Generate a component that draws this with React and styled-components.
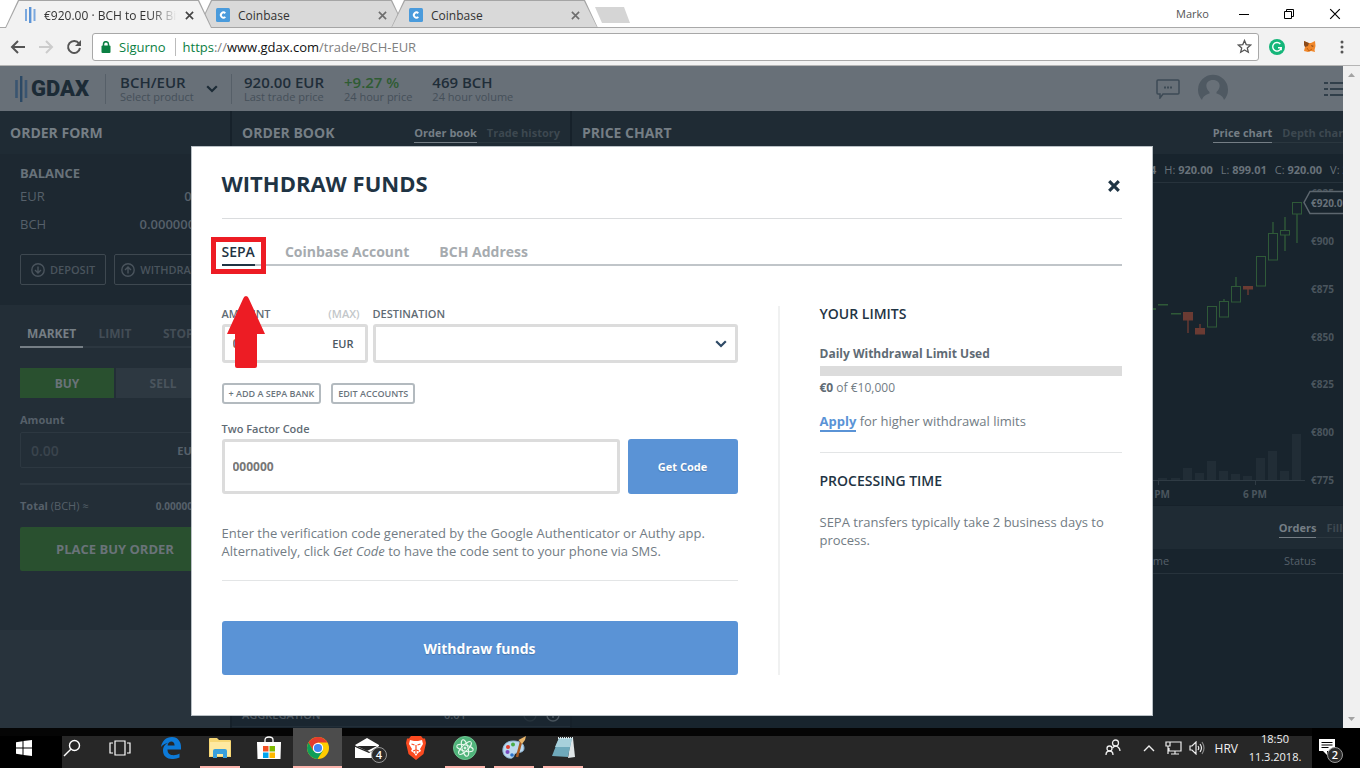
import { useState } from "react";
import styled, { createGlobalStyle } from "styled-components";

const GlobalStyle = createGlobalStyle`
    * {
        box-sizing: border-box;
    }
    body {
        margin: 0;
        font-family: "Open Sans", "Noto Sans", sans-serif;
        background: #18242d;
    }
    button, input, select {
        font-family: inherit;
        margin: 0;
    }
    button {
        cursor: pointer;
    }
    h1, h2, h3, p {
        margin: 0;
    }
`

/* ---------- browser ---------- */

const GdaxMark = () => (
    <svg width="12" height="20" viewBox="0 0 12 20">
        <path d="M2 4v12M10.500 4v12" stroke="#7aa8de" strokeWidth="2" />
        <path d="M6.200 2v16" stroke="#5a93d6" strokeWidth="2.400" />
    </svg>
)

const CoinbaseMark = () => (
    <svg width="14" height="14" viewBox="0 0 14 14">
        <rect width="14" height="14" rx="1.500" fill="#4a9bdc" />
        <path d="M9.300 5.200A2.600 2.600 0 1 0 9.300 8.900" fill="none" stroke="#fff" strokeWidth="1.900" />
    </svg>
)

const CloseIcon = ({ size = 9, color = "#5a5a5a", width = 1.8 }) => (
    <svg width={size} height={size} viewBox="0 0 10 10">
        <path d="M1 1l8 8M9 1l-8 8" stroke={color} strokeWidth={width} />
    </svg>
)

const tabs = [
    { id: 1, title: "€920.00 · BCH to EUR Bitcoin", icon: <GdaxMark />, active: true },
    { id: 2, title: "Coinbase", icon: <CoinbaseMark /> },
    { id: 3, title: "Coinbase", icon: <CoinbaseMark /> },
]

const Browser = () => {
    return <header>
        <TabStrip>
            {tabs.map((tab) => (
                <BrowserTab key={tab.id} $active={tab.active}>
                    {tab.icon}
                    <TabTitle $active={tab.active}>{tab.title}</TabTitle>
                    <PlainButton aria-label="Close tab">
                        <CloseIcon color={tab.active ? "#444" : "#6e6e6e"} />
                    </PlainButton>
                </BrowserTab>
            ))}
            <NewTab aria-label="New tab" />
            <WindowControls>
                <UserName>Marko</UserName>
                <PlainButton aria-label="Minimize">
                    <svg width="10" height="10" viewBox="0 0 10 10"><path d="M0 5.500h10" stroke="#000" /></svg>
                </PlainButton>
                <PlainButton aria-label="Restore">
                    <svg width="10" height="10" viewBox="0 0 10 10">
                        <path d="M.5 2.500h7v7h-7zM2.500 2.500v-2h7v7h-2" fill="none" stroke="#000" />
                    </svg>
                </PlainButton>
                <PlainButton aria-label="Close"><CloseIcon size={12} color="#000" width={1} /></PlainButton>
            </WindowControls>
        </TabStrip>
        <Toolbar>
            <PlainButton aria-label="Back">
                <svg width="16" height="14" viewBox="0 0 16 14">
                    <path d="M15 7H2M8 1L2 7l6 6" fill="none" stroke="#555" strokeWidth="2" />
                </svg>
            </PlainButton>
            <PlainButton aria-label="Forward">
                <svg width="16" height="14" viewBox="0 0 16 14">
                    <path d="M1 7h13M8 1l6 6-6 6" fill="none" stroke="#ccc" strokeWidth="2" />
                </svg>
            </PlainButton>
            <PlainButton aria-label="Reload">
                <svg width="16" height="16" viewBox="0 0 16 16">
                    <path d="M13 4.500A6 6 0 1 0 14 9" fill="none" stroke="#555" strokeWidth="2" />
                    <path d="M15 1v6H9z" fill="#555" />
                </svg>
            </PlainButton>
            <AddressBar>
                <svg width="10" height="12" viewBox="0 0 10 12">
                    <rect y="4.500" x=".5" width="9" height="7.500" rx="1" fill="#0b8043" />
                    <path d="M2.500 5V3.200a2.500 2.500 0 0 1 5 0V5" fill="none" stroke="#0b8043" strokeWidth="1.500" />
                </svg>
                <Secure>Sigurno</Secure>
                <Url><em>https</em>://<b>www.gdax.com</b>/trade/BCH-EUR</Url>
                <PlainButton aria-label="Bookmark">
                    <svg width="15" height="15" viewBox="0 0 15 15">
                        <path d="M7.500 1.500l1.700 4.100 4.500.4-3.400 2.900 1 4.300-3.800-2.300-3.800 2.300 1-4.300L1.300 6l4.500-.4z" fill="none" stroke="#555" strokeWidth="1.300" />
                    </svg>
                </PlainButton>
            </AddressBar>
            <Extensions>
                <PlainButton aria-label="Grammarly">
                    <svg width="16" height="16" viewBox="0 0 16 16">
                        <circle cx="8" cy="8" r="8" fill="#15b67a" />
                        <path d="M11.300 5A4.300 4.300 0 1 0 12.200 8.800H9M12.200 8.800v2.400" fill="none" stroke="#fff" strokeWidth="1.400" />
                    </svg>
                </PlainButton>
                <PlainButton aria-label="MetaMask">
                    <svg width="13" height="13" viewBox="0 0 13 13">
                        <path d="M1 1l4 2h3l4-2 .5 5-1 4 .5 2-4-1-3 1-4-1 1-4z" fill="#f0872a" />
                        <path d="M1 1l5 2-1 3-3 1-1-2zM8 5l3 1-2 1z" fill="#8a4b1c" />
                        <path d="M4 8l2 3 3-2" fill="none" stroke="#c4610f" />
                    </svg>
                </PlainButton>
                <PlainButton aria-label="Menu">
                    <svg width="4" height="14" viewBox="0 0 4 14" fill="#555">
                        <circle cx="2" cy="2" r="1.500" /><circle cx="2" cy="7" r="1.500" /><circle cx="2" cy="12" r="1.500" />
                    </svg>
                </PlainButton>
            </Extensions>
        </Toolbar>
    </header>
}

/* ---------- GDAX top bar ---------- */

const Chevron = ({ color }) => (
    <svg width="12" height="8" viewBox="0 0 12 8">
        <path d="M1.200 1.200L6 6l4.800-4.800" fill="none" stroke={color} strokeWidth="2.200" />
    </svg>
)

const TopBar = () => {
    return <Top>
        <Logo href="#">
            <svg width="15" height="28" viewBox="0 0 15 28">
                <path d="M2.500 5v18M12 5v18" stroke="#3a5571" strokeWidth="2.600" />
                <path d="M7.200 1v26" stroke="#2c4965" strokeWidth="2.400" />
            </svg>
            GDAX
        </Logo>
        <Product>
            <Stat><strong>BCH/EUR</strong><span>Select product</span></Stat>
            <Chevron color="#1c2b36" />
        </Product>
        <Stat><strong>920.00 EUR</strong><span>Last trade price</span></Stat>
        <Stat $up><strong>+9.27 %</strong><span>24 hour price</span></Stat>
        <Stat><strong>469 BCH</strong><span>24 hour volume</span></Stat>
        <TopIcons>
            <PlainButton aria-label="Chat">
                <svg width="24" height="20" viewBox="0 0 24 20">
                    <path d="M2 1h20a1 1 0 0 1 1 1v12a1 1 0 0 1-1 1H7l-3 4v-4H2a1 1 0 0 1-1-1V2a1 1 0 0 1 1-1z" fill="none" stroke="#3d4a55" strokeWidth="1.500" />
                    <path d="M8 8.500h2M11 8.500h2M14 8.500h2" stroke="#3d4a55" strokeWidth="2" />
                </svg>
            </PlainButton>
            <PlainButton aria-label="Profile">
                <svg width="30" height="30" viewBox="0 0 30 30">
                    <path d="M4 26A15 15 0 1 1 26 26C25 22 21 20 18.500 19.500V18C24 13 22 6 15 6S6 13 11.500 18v1.500C9 20 5 22 4 26z" fill="#4f5962" />
                </svg>
            </PlainButton>
            <PlainButton aria-label="Menu">
                <svg width="22" height="16" viewBox="0 0 22 16">
                    <path d="M0 2h4M6 2h16M0 8h4M6 8h16M0 14h4M6 14h16" stroke="#313f4a" strokeWidth="2" />
                </svg>
            </PlainButton>
        </TopIcons>
    </Top>
}

/* ---------- order form ---------- */

const CircleArrow = ({ up }) => (
    <svg width="14" height="14" viewBox="0 0 14 14" fill="none" stroke="#4a545d" strokeWidth="1.400">
        <circle cx="7" cy="7" r="6.200" />
        <path d={up ? "M7 10.500V4M4 7l3-3 3 3" : "M7 3.500V10M4 7l3 3 3-3"} />
    </svg>
)

const OrderForm = () => {
    return <FormColumn>
        <PanelHeader><PanelTitle>ORDER FORM</PanelTitle></PanelHeader>
        <Balance>
            <h3>BALANCE</h3>
            <BalanceRow><span>EUR</span><b>0.00</b></BalanceRow>
            <BalanceRow><span>BCH</span><b>0.00000000</b></BalanceRow>
            <Transfer>
                <OutlineButton><CircleArrow />DEPOSIT</OutlineButton>
                <OutlineButton><CircleArrow up />WITHDRAW</OutlineButton>
            </Transfer>
        </Balance>
        <Order onSubmit={(e) => e.preventDefault()}>
            <OrderTabs>
                <OrderTab type="button" $active>MARKET</OrderTab>
                <OrderTab type="button">LIMIT</OrderTab>
                <OrderTab type="button">STOP</OrderTab>
            </OrderTabs>
            <Sides>
                <Side type="button" $buy>BUY</Side>
                <Side type="button">SELL</Side>
            </Sides>
            <OrderLabel htmlFor="order-amount">Amount</OrderLabel>
            <OrderInput>
                <input id="order-amount" placeholder="0.00" />
                <span>EUR</span>
            </OrderInput>
            <Total>
                <span><b>Total</b> (BCH) ≈</span>
                <b>0.00000000</b>
            </Total>
            <PlaceOrder>PLACE BUY ORDER</PlaceOrder>
        </Order>
    </FormColumn>
}

/* ---------- order book ---------- */

const OrderBook = () => {
    return <BookColumn>
        <PanelHeader>
            <PanelTitle>ORDER BOOK</PanelTitle>
            <PanelTabs>
                <PanelTab $active>Order book</PanelTab>
                <PanelTab>Trade history</PanelTab>
            </PanelTabs>
        </PanelHeader>
        <Aggregation>
            <span>AGGREGATION</span>
            <span>0.01</span>
            <Steps>
                <svg width="14" height="14" viewBox="0 0 14 14" fill="none" stroke="#27333c" strokeWidth="1.400">
                    <circle cx="7" cy="7" r="6" /><path d="M4 7h6" />
                </svg>
                <svg width="14" height="14" viewBox="0 0 14 14" fill="none" stroke="#4a555e" strokeWidth="1.400">
                    <circle cx="7" cy="7" r="6" /><path d="M4 7h6M7 4v6" />
                </svg>
            </Steps>
        </Aggregation>
    </BookColumn>
}

/* ---------- price chart ---------- */

// x, body top, body bottom, wick top, wick bottom
const candles = [
    { x: 8, open: 121, close: 122, high: 121, low: 122 },
    { x: 21, open: 130, close: 131, high: 130, low: 131 },
    { x: 33, open: 129, close: 137, high: 129, low: 150, down: true },
    { x: 45, open: 145, close: 151, high: 141, low: 151, down: true },
    { x: 57, open: 123, close: 144, high: 123, low: 144 },
    { x: 69, open: 118, close: 134, high: 116, low: 134 },
    { x: 81, open: 103, close: 119, high: 94, low: 119 },
    { x: 93, open: 103, close: 106, high: 103, low: 112, down: true },
    { x: 106, open: 73, close: 103, high: 73, low: 103 },
    { x: 118, open: 50, close: 77, high: 39, low: 77 },
    { x: 130, open: 47, close: 52, high: 34, low: 68 },
    { x: 142, open: 19, close: 31, high: 19, low: 60 },
]
const volumes = [2, 2, 12, 7, 19, 9, 6, 4, 22, 29, 9, 46]
const prices = [
    ["€925", 10],
    ["€900", 58],
    ["€875", 106],
    ["€850", 154],
    ["€825", 201],
    ["€800", 249],
    ["€775", 297],
]

const Candles = () => (
    <CandleChart width="210" height="322" viewBox="0 0 210 322">
        {volumes.map((v, i) => (
            <rect key={i} x={candles[i].x} y={297 - v} width="9" height={v} fill="#212d36" />
        ))}
        <path d="M0 297.500h155M8.500 297v5M105.500 297v5" stroke="#2f3b44" fill="none" />
        <path d="M0 126h6" stroke="#2b5234" strokeWidth="2" />
        {candles.map((c) => {
            const color = c.down ? "#6b3b33" : "#2f5a38"
            return <g key={c.x} stroke={color}>
                <path d={`M${c.x + 5} ${c.high}V${c.open}M${c.x + 5} ${c.close}V${c.low}`} strokeWidth="1.400" />
                <rect x={c.x + 0.5} y={c.open + 0.5} width="9" height={c.close - c.open - 0.5} fill={c.down ? color : "none"} />
            </g>
        })}
        {prices.map(([label, y]) => <text key={label} x="161" y={y + 4}>{label}</text>)}
        <text x="8" y="315" textAnchor="middle">3 PM</text>
        <text x="105" y="315" textAnchor="middle">6 PM</text>
        <path d="M211 8.500h-51l-6 11 6 11h51z" fill="#18242d" stroke="#5c666e" strokeWidth="1.500" />
        <text x="161" y="24" className="current">€920.00</text>
    </CandleChart>
)

const ChartPanel = () => {
    return <ChartColumn>
        <ChartHeader>
            <PanelTitle>PRICE CHART</PanelTitle>
            <PanelTabs>
                <PanelTab $active>Price chart</PanelTab>
                <PanelTab>Depth chart</PanelTab>
            </PanelTabs>
        </ChartHeader>
        <Ohlc>
            <span>O: <b>915.04</b></span>
            <span>H: <b>920.00</b></span>
            <span>L: <b>899.01</b></span>
            <span>C: <b>920.00</b></span>
            <span>V: <b>27</b></span>
        </Ohlc>
        <Candles />
        <OrdersHeader>
            <PanelTabs>
                <PanelTab $active>Orders</PanelTab>
                <PanelTab>Fills</PanelTab>
            </PanelTabs>
        </OrdersHeader>
        <OrdersTable>
            <thead>
                <tr><th>Size</th><th>Filled</th><th>Price</th><th>Fee</th><th>Time</th><th>Status</th></tr>
            </thead>
        </OrdersTable>
    </ChartColumn>
}

/* ---------- withdraw modal ---------- */

const methods = ["SEPA", "Coinbase Account", "BCH Address"]

const WithdrawModal = () => {
    const [method, setMethod] = useState("SEPA")
    return <Modal role="dialog" aria-labelledby="withdraw-title">
        <ModalHeader>
            <h2 id="withdraw-title">WITHDRAW FUNDS</h2>
            <CloseDialog aria-label="Close dialog"><CloseIcon size={12} color="#1f3444" width={2.6} /></CloseDialog>
        </ModalHeader>
        <Methods>
            {methods.map((m) => (
                <Method key={m} $active={m === method} onClick={() => setMethod(m)}>{m}</Method>
            ))}
            <Highlight />
            <Pointer width="38" height="72" viewBox="0 0 38 72">
                <path d="M19 0q2 0 3 3l16 35H30v32q0 2-2 2H10q-2 0-2-2V38H0L16 3q1-3 3-3z" fill="#ed1c24" />
            </Pointer>
        </Methods>
        <ModalBody>
            <Funds onSubmit={(e) => e.preventDefault()}>
                <FieldRow>
                    <AmountField>
                        <LabelRow>
                            <Label htmlFor="amount">AMOUNT</Label>
                            <MaxButton type="button">(MAX)</MaxButton>
                        </LabelRow>
                        <InputBox>
                            <input id="amount" placeholder="0.00" />
                            <span>EUR</span>
                        </InputBox>
                    </AmountField>
                    <DestinationField>
                        <Label htmlFor="destination">DESTINATION</Label>
                        <InputBox>
                            <select id="destination" />
                            <Chevron color="#2e4a66" />
                        </InputBox>
                    </DestinationField>
                </FieldRow>
                <Accounts>
                    <SmallButton type="button">+ ADD A SEPA BANK</SmallButton>
                    <SmallButton type="button">EDIT ACCOUNTS</SmallButton>
                </Accounts>
                <Label htmlFor="code">Two Factor Code</Label>
                <CodeRow>
                    <InputBox $tall><input id="code" placeholder="000000" /></InputBox>
                    <CodeButton type="button">Get Code</CodeButton>
                </CodeRow>
                <Help>
                    Enter the verification code generated by the Google Authenticator or Authy app.
                    Alternatively, click <em>Get Code</em> to have the code sent to your phone via SMS.
                </Help>
                <Submit>Withdraw funds</Submit>
            </Funds>
            <Limits>
                <h3>YOUR LIMITS</h3>
                <LimitLabel htmlFor="limit">Daily Withdrawal Limit Used</LimitLabel>
                <LimitBar id="limit" value="0" max="10000" />
                <LimitText><b>€0</b> of €10,000</LimitText>
                <ApplyText><a href="#">Apply</a> for higher withdrawal limits</ApplyText>
                <h3>PROCESSING TIME</h3>
                <Processing>SEPA transfers typically take 2 business days to process.</Processing>
            </Limits>
        </ModalBody>
    </Modal>
}

/* ---------- taskbar ---------- */

const icons = {
    start: <svg width="16" height="16" viewBox="0 0 16 16" fill="#fff">
        <path d="M0 2.200L6.500 1.300v6.200H0zM7.500 1.100L16 0v7.500H7.500zM0 8.500h6.500v6.200L0 13.800zM7.500 8.500H16V16l-8.500-1.100z" />
    </svg>,
    search: <svg width="18" height="18" viewBox="0 0 18 18" fill="none" stroke="#fff" strokeWidth="1.400">
        <circle cx="11.500" cy="6.500" r="5" /><path d="M7.800 10.200L1 17" />
    </svg>,
    view: <svg width="22" height="16" viewBox="0 0 22 16" fill="none" stroke="#fff" strokeWidth="1.200">
        <path d="M6 1h10v14H6zM4 3H1v10h3M18 3h3v10h-3" />
    </svg>,
    edge: <svg width="20" height="22" viewBox="0 0 20 22" fill="#0d7ad8">
        <path d="M0 10C1 4 5 0 11 0c6 0 9 5 9 10v2.500H6.500c0 7 8 6.500 12 4v4C12 23.500 2 22.500 2 13.500 2 9 5 6.500 8 5.500 4.500 6 1.500 8 0 10zm6.600-1.500h7c0-5.500-6.500-5-7 0z" />
    </svg>,
    files: <svg width="22" height="20" viewBox="0 0 22 20">
        <path d="M0 1q0-1 1-1h7l2 2h11q1 0 1 1v16H0z" fill="#f7d774" />
        <path d="M1 4h20v14H1z" fill="#ffe9a0" />
        <path d="M4 20v-7q0-2 2-2h10q2 0 2 2v7h-4v-4H8v4z" fill="#39a0dc" />
    </svg>,
    store: <svg width="24" height="24" viewBox="0 0 24 24">
        <path d="M8 7V4q0-3 4-3t4 3v3" fill="none" stroke="#fff" strokeWidth="1.300" />
        <path d="M0 6h24l-.5 17H.5z" fill="#fff" />
        <path d="M6 10h5.500v5.500H6z" fill="#f25022" /><path d="M12.500 10H18v5.500h-5.500z" fill="#7fba00" />
        <path d="M6 16.500h5.500V22H6z" fill="#00a4ef" /><path d="M12.500 16.500H18V22h-5.500z" fill="#ffb900" />
    </svg>,
    chrome: <svg width="22" height="22" viewBox="0 0 22 22">
        <circle cx="11" cy="11" r="11" fill="#fc0" />
        <path d="M1.500 5.500A11 11 0 0 1 20.500 5.500H11L6.200 13.700z" fill="#e33b2e" />
        <path d="M1.500 5.500A11 11 0 0 0 10.500 22L15.800 13.700 6.200 13.700z" fill="#0f9d58" />
        <circle cx="11" cy="11" r="5.200" fill="#fff" /><circle cx="11" cy="11" r="4.100" fill="#4285f4" />
    </svg>,
    mail: <svg width="24" height="20" viewBox="0 0 24 20" fill="#fff">
        <path d="M0 7L12 0l12 7v1l-9 6L1 8zM0 9l11 7 5-1-4 5H0z" /><path d="M0 9l14 6 10-6v11H0z" />
        <path d="M2 8h20L12 13z" fill="#252525" />
    </svg>,
    brave: <svg width="20" height="24" viewBox="0 0 20 24">
        <path d="M5 0h10l2 2.500h2L20 7l-2.500 11L10 24l-7.500-6L0 7l1-4.500h2z" fill="#fb4a20" />
        <path d="M4 4l4 1h4l4-1 1 4-3 5 1 2-3 2-2 3-2-3-3-2 1-2-3-5z" fill="#fff" />
        <path d="M5.500 8l3 1M14.500 8l-3 1M10 9v5M7 15l3-1 3 1M10 15v3" stroke="#fb4a20" strokeWidth="1.200" fill="none" />
    </svg>,
    atom: <svg width="24" height="24" viewBox="0 0 24 24" fill="none" stroke="#e6f7ec">
        <circle cx="12" cy="12" r="11.500" fill="#4fb37a" stroke="#6cc590" />
        <ellipse cx="12" cy="12" rx="8.500" ry="3" transform="rotate(15 12 12)" />
        <ellipse cx="12" cy="12" rx="8.500" ry="3" transform="rotate(75 12 12)" />
        <ellipse cx="12" cy="12" rx="8.500" ry="3" transform="rotate(135 12 12)" />
        <circle cx="12" cy="12" r="1" fill="#e6f7ec" />
    </svg>,
    paint: <svg width="24" height="24" viewBox="0 0 24 24">
        <path d="M11 5C4 5 0 10 1 16c1 5 6 7 9 6 3-1 1-4 4-5s8 0 8-5-5-7-11-7z" fill="#bcd9ef" stroke="#8db4d3" />
        <circle cx="6" cy="11" r="2" fill="#e23d2e" /><circle cx="11" cy="8.500" r="2" fill="#49ad48" />
        <circle cx="5.500" cy="16" r="2" fill="#7a4bc0" /><circle cx="10" cy="19" r="1.800" fill="#2c74cc" />
        <path d="M19 6L15 21" stroke="#a85a20" strokeWidth="2.500" /><path d="M16.500 4L24 0l-1 4-3 4z" fill="#e8b56b" />
    </svg>,
    notes: <svg width="24" height="22" viewBox="0 0 24 22">
        <path d="M20 1h2l2 19-7 1z" fill="#dfe5e7" />
        <path d="M8 1h13l-4 19-16-1z" fill="#6fa9bb" /><path d="M8 1h13l-2 9H4z" fill="#a8d0db" />
        <path d="M7 1h15" stroke="#dce9ec" strokeDasharray="1 1" strokeWidth="2" />
    </svg>,
}

const apps = [
    { name: "Edge", icon: icons.edge },
    { name: "Explorer", icon: icons.files, open: true },
    { name: "Store", icon: icons.store },
    { name: "Chrome", icon: icons.chrome, open: true, active: true },
    { name: "Mail", icon: icons.mail, badge: 4 },
    { name: "Brave", icon: icons.brave },
    { name: "Atom", icon: icons.atom, open: true },
    { name: "Paint", icon: icons.paint, open: true },
    { name: "Notepad", icon: icons.notes, open: true },
]

const Taskbar = () => {
    return <Bar>
        <SystemButton aria-label="Start">{icons.start}</SystemButton>
        <SystemButton aria-label="Search">{icons.search}</SystemButton>
        <SystemButton aria-label="Task view">{icons.view}</SystemButton>
        <AppList>
            {apps.map((app) => (
                <AppButton key={app.name} aria-label={app.name} $open={app.open} $active={app.active}>
                    {app.icon}
                    {app.badge && <Badge>{app.badge}</Badge>}
                </AppButton>
            ))}
        </AppList>
        <Tray>
            <svg width="16" height="18" viewBox="0 0 16 18" fill="none" stroke="#eee" strokeWidth="1.300">
                <circle cx="10.500" cy="4" r="3" /><circle cx="4.500" cy="9.500" r="2.500" />
                <path d="M1 16q0-4 3.500-4T8 16M7.500 9q3-3.500 6-.5 1.500 1.500 1.500 3.500" />
            </svg>
            <svg width="12" height="8" viewBox="0 0 12 8" fill="none" stroke="#eee" strokeWidth="1.400"><path d="M1 7l5-5 5 5" /></svg>
            <svg width="17" height="14" viewBox="0 0 17 14" fill="none" stroke="#eee" strokeWidth="1.200">
                <path d="M5 1h11v9H4V7M1 1h4v4H1zM3 5v8M10 10v3M6 13h8" />
            </svg>
            <svg width="16" height="14" viewBox="0 0 16 14" fill="none" stroke="#eee" strokeWidth="1.200">
                <path d="M1 5h2l4-4v12L3 9H1zM9 5q1.500 2 0 4M11 3q3 4 0 8" /><path d="M13 1q4 6 0 12" stroke="#888" />
            </svg>
            <span>HRV</span>
            <Clock><span>18:50</span><span>11.3.2018.</span></Clock>
        </Tray>
        <ActionCenter aria-label="Notifications">
            <svg width="16" height="16" viewBox="0 0 16 16">
                <path d="M0 0h16v12H8v4l-4-4H0z" fill="#fff" /><path d="M2.500 3.500h11M2.500 6h11M2.500 8.500h7" stroke="#000" />
            </svg>
            <Badge>2</Badge>
        </ActionCenter>
    </Bar>
}

const App = () => {
    return <Screen>
        <GlobalStyle />
        <Browser />
        <Viewport>
            <Page>
                <Site>
                    <TopBar />
                    <Columns>
                        <OrderForm />
                        <OrderBook />
                        <ChartPanel />
                    </Columns>
                </Site>
                <Overlay><WithdrawModal /></Overlay>
            </Page>
            <Scrollbar>
                <svg width="7" height="4" viewBox="0 0 7 4"><path d="M0 4l3.500-4L7 4z" fill="#a3a3a3" /></svg>
                <svg width="7" height="4" viewBox="0 0 7 4"><path d="M0 0l3.500 4L7 0z" fill="#a3a3a3" /></svg>
            </Scrollbar>
        </Viewport>
        <Taskbar />
    </Screen>
}

const Screen = styled.div`
    min-height: 100vh;
    display: flex;
    flex-direction: column;
`
const PlainButton = styled.button`
    border: 0;
    padding: 0;
    background: none;
    display: flex;
    align-items: center;
    justify-content: center;
    flex-shrink: 0;
`
const TabStrip = styled.div`
    display: flex;
    height: 28px;
    padding-left: 5px;
    background: #fff;
    border-bottom: 1px solid #a9a9a9;
`
const BrowserTab = styled.div`
    position: relative;
    isolation: isolate;
    display: flex;
    align-items: center;
    gap: 8px;
    width: 207px;
    height: 28px;
    padding: 2px 18px 0 ${(p) => (p.$active ? 19 : 18)}px;
    margin-right: -14px;
    z-index: ${(p) => (p.$active ? 1 : 0)};
    &::before, &::after {
        content: "";
        position: absolute;
        inset: 0;
        z-index: -2;
        background: #a5a5a5;
        clip-path: polygon(0 100%, 13px 0, calc(100% - 13px) 0, 100% 100%);
    }
    &::after {
        inset: 1px 1px ${(p) => (p.$active ? 0 : 1)}px;
        z-index: -1;
        background: ${(p) => (p.$active ? "#f2f2f2" : "#d9d9d9")};
    }
`
const TabTitle = styled.span`
    flex: 1;
    overflow: hidden;
    white-space: nowrap;
    font-size: 12px;
    color: #333;
    mask-image: ${(p) => (p.$active ? "linear-gradient(to right, #000 80%, transparent)" : "none")};
`
const NewTab = styled.button`
    width: 35px;
    height: 16px;
    margin: 7px 0 0 11px;
    padding: 0;
    border: 0;
    background: #d5d5d5;
    clip-path: polygon(0 0, 29px 0, 100% 100%, 7px 100%);
`
const WindowControls = styled.div`
    display: flex;
    align-items: center;
    gap: 35px;
    margin-left: auto;
    padding-right: 19px;
`
const UserName = styled.span`
    font-size: 11px;
    color: #555;
    margin-right: -5px;
`
const Toolbar = styled.div`
    display: flex;
    align-items: center;
    gap: 12px;
    height: 38px;
    padding: 0 16px 0 10px;
    background: #f2f2f2;
    border-bottom: 1px solid #b5b5b5;
`
const AddressBar = styled.div`
    flex: 1;
    display: flex;
    align-items: center;
    height: 28px;
    margin: 0 -2px;
    padding: 0 6px 0 8px;
    background: #fff;
    border: 1px solid #a8a8a8;
    border-radius: 3px;
    font-size: 14px;
`
const Secure = styled.span`
    color: #0b8043;
    font-size: 13px;
    margin-left: 8px;
    padding-right: 9px;
    border-right: 1px solid #bbb;
`
const Url = styled.span`
    flex: 1;
    margin-left: 7px;
    font-size: 13px;
    color: #808080;
    em {
        font-style: normal;
        color: #0b8043;
    }
    b {
        font-weight: 400;
        color: #111;
    }
`
const Extensions = styled.div`
    display: flex;
    align-items: center;
    gap: 18px;
    button:last-child {
        margin-left: 6px;
    }
`
const Viewport = styled.div`
    flex: 1;
    display: flex;
`
const Page = styled.main`
    flex: 1;
    min-width: 0;
    display: grid;
    grid-template-columns: minmax(0, 1fr);
    overflow: hidden;
`
/* as wide as the window, its right edge runs under the scrollbar */
const Site = styled.div`
    grid-area: 1 / 1;
    width: 100vw;
    display: flex;
    flex-direction: column;
`
const Overlay = styled.div`
    grid-area: 1 / 1;
    z-index: 2;
    display: flex;
    align-items: flex-start;
    justify-content: center;
    padding: 80px 20px 12px;
`
const Scrollbar = styled.div`
    width: 17px;
    padding: 7px 0;
    background: #f0f0f0;
    display: flex;
    flex-direction: column;
    align-items: center;
    justify-content: space-between;
`
const Top = styled.div`
    display: flex;
    align-items: center;
    gap: 20px;
    height: 45px;
    padding: 0 14px;
    background: #687078;
`
const Logo = styled.a`
    display: flex;
    align-items: center;
    gap: 2px;
    width: 76px;
    font: 900 22px Roboto, sans-serif;
    color: #1c2b36;
    text-decoration: none;
`
const Product = styled.div`
    display: flex;
    align-items: center;
    justify-content: space-between;
    width: 127px;
    height: 30px;
    margin: 0 -8px 0 -5px;
    padding: 0 13px 0 14px;
    border: 0 solid #565f68;
    border-width: 0 1px;
`
const Stat = styled.div`
    display: flex;
    flex-direction: column;
    white-space: nowrap;
    strong {
        font-size: 15px;
        line-height: 16px;
        font-weight: 600;
        color: ${(p) => (p.$up ? "#2f5c33" : "#1f2d38")};
    }
    span {
        font-size: 11px;
        line-height: 13px;
        color: #454f58;
    }
`
const TopIcons = styled.div`
    display: flex;
    align-items: center;
    gap: 18px;
    margin-left: auto;
    button:last-child {
        margin-left: 78px;
    }
`
const Columns = styled.div`
    flex: 1;
    display: flex;
`
const PanelHeader = styled.div`
    display: flex;
    align-items: center;
    justify-content: space-between;
    height: 43px;
    padding: 0 10px;
    background: #1f2b34;
`
const ChartHeader = styled(PanelHeader)`
    padding-right: 12px;
`
const PanelTitle = styled.h2`
    font-size: 14px;
    font-weight: 700;
    color: #757e85;
`
const PanelTabs = styled.div`
    display: flex;
    margin-top: 3px;
`
const PanelTab = styled.button`
    border: 0;
    border-bottom: 1px solid ${(p) => (p.$active ? "#757e85" : "#2b373f")};
    background: none;
    padding: 0 0 1px;
    font-size: 11px;
    line-height: 16px;
    font-weight: 700;
    color: ${(p) => (p.$active ? "#757e85" : "#3d4850")};
    & + & {
        padding-left: 10px;
    }
`
const FormColumn = styled.section`
    flex: 0 0 232px;
    min-width: 0;
    background: #28333c;
    border-right: 2px solid #16212a;
`
const BookColumn = styled.section`
    flex: 0 0 340px;
    display: flex;
    flex-direction: column;
    justify-content: space-between;
    background: #1a2630;
    border-right: 2px solid #16212a;
    padding-bottom: 1px;
`
const ChartColumn = styled.section`
    flex: 1;
    min-width: 0;
    display: flex;
    flex-direction: column;
    background: #18242d;
`
const Balance = styled.div`
    padding: 10px 20px 20px;
    background: #1d2831;
    h3 {
        font-size: 13px;
        line-height: 18px;
        color: #68727a;
        margin-bottom: 5px;
    }
`
const BalanceRow = styled.div`
    display: flex;
    justify-content: space-between;
    margin-bottom: 10px;
    font-size: 13px;
    line-height: 18px;
    color: #56606a;
    b {
        font-weight: 600;
    }
`
const Transfer = styled.div`
    display: flex;
    gap: 8px;
    margin-top: 21px;
`
const OutlineButton = styled.button`
    display: flex;
    flex-shrink: 0;
    align-items: center;
    gap: 5px;
    height: 31px;
    padding: 0 10px;
    white-space: nowrap;
    border: 1px solid #3e4850;
    border-radius: 2px;
    background: none;
    font-size: 11px;
    font-weight: 600;
    color: #4a545d;
    &:last-child {
        padding: 0 6px;
    }
`
const Order = styled.form`
    padding: 19px 20px 59px;
    background: #232e37;
`
const OrderTabs = styled.div`
    display: grid;
    grid-template-columns: repeat(3, 1fr);
`
const OrderTab = styled.button`
    padding: 0 0 2px;
    border: 0;
    border-bottom: 2px solid ${(p) => (p.$active ? "#757e85" : "#2c3740")};
    background: none;
    font-size: 12px;
    line-height: 20px;
    font-weight: 700;
    color: ${(p) => (p.$active ? "#757e85" : "#434d56")};
`
const Sides = styled.div`
    display: grid;
    grid-template-columns: 1fr 1fr;
    gap: 2px;
    margin: 20px 0 14px;
`
const Side = styled.button`
    height: 30px;
    border: 0;
    background: ${(p) => (p.$buy ? "#29502f" : "#2d3841")};
    font-size: 12px;
    font-weight: 700;
    color: ${(p) => (p.$buy ? "#6a7379" : "#4a545d")};
`
const OrderLabel = styled.label`
    display: block;
    font-size: 11px;
    line-height: 16px;
    font-weight: 700;
    color: #56606a;
`
const OrderInput = styled.div`
    display: flex;
    align-items: center;
    height: 36px;
    margin-top: 4px;
    padding: 0 10px;
    border: 1px solid #2d3841;
    border-radius: 2px;
    font-size: 11px;
    font-weight: 700;
    color: #56606a;
    input {
        flex: 1;
        width: 100%;
        min-width: 0;
        border: 0;
        padding: 0;
        background: none;
        font-size: 14px;
        font-weight: 600;
    }
    input::placeholder {
        color: #3a444d;
    }
`
const Total = styled.div`
    display: flex;
    justify-content: space-between;
    margin: 15px 0 13px;
    padding-top: 13px;
    border-top: 2px solid #2c3740;
    font-size: 11px;
    line-height: 16px;
    color: #56606a;
    > b {
        font-size: 10px;
    }
`
const PlaceOrder = styled.button`
    width: 100%;
    height: 44px;
    border: 0;
    border-radius: 2px;
    background: #29502f;
    font-size: 13px;
    font-weight: 700;
    color: #6a7379;
`
const Aggregation = styled.div`
    display: grid;
    grid-template-columns: 1fr auto 1fr;
    align-items: center;
    height: 24px;
    padding: 0 10px;
    border-bottom: 1px solid #222e38;
    font-size: 11px;
    font-weight: 600;
    color: #4a555e;
    span:nth-child(2) {
        padding-left: 108px;
    }
`
const Steps = styled.div`
    display: flex;
    justify-content: flex-end;
    gap: 9px;
`
const Ohlc = styled.div`
    display: flex;
    justify-content: flex-end;
    gap: 8px;
    height: 29px;
    padding-right: 5px;
    border-bottom: 1px solid #27333c;
    font-size: 11px;
    line-height: 32px;
    color: #68727a;
    white-space: nowrap;
    b {
        font-weight: 700;
    }
`
const CandleChart = styled.svg`
    align-self: flex-end;
    text {
        font-size: 10px;
        font-weight: 700;
        fill: #4a555d;
    }
    .current {
        fill: #68727a;
    }
`
const OrdersHeader = styled(ChartHeader)`
    justify-content: flex-end;
    height: 44px;
    border-top: 1px solid #16212a;
`
const OrdersTable = styled.table`
    width: 100%;
    table-layout: fixed;
    border-collapse: collapse;
    th {
        height: 24px;
        padding: 0;
        border-bottom: 1px solid #27333c;
        font-size: 11px;
        font-weight: 400;
        color: #56606a;
    }
    th:nth-child(5) {
        width: 143px;
    }
    th:last-child {
        width: 132px;
        padding-left: 12px;
    }
`
const Modal = styled.div`
    flex: 1;
    max-width: 962px;
    padding: 0 30px 40px;
    background: #fff;
    border: 1px solid #b9c0c5;
    color: #5f6b74;
`
const ModalHeader = styled.div`
    display: flex;
    align-items: flex-end;
    justify-content: space-between;
    padding: 20px 2px 19px 0;
    border-bottom: 1px solid #dadcde;
    h2 {
        font-size: 22px;
        line-height: 32px;
        font-weight: 700;
        color: #1f3444;
    }
`
const CloseDialog = styled(PlainButton)`
    height: 26px;
`
const Methods = styled.div`
    position: relative;
    display: flex;
    gap: 30px;
    margin-top: 23px;
    border-bottom: 2px solid #c0c5c9;
`
const Method = styled.button`
    margin-bottom: -2px;
    padding: 0 0 2px;
    border: 0;
    border-bottom: 2px solid ${(p) => (p.$active ? "#1f3444" : "transparent")};
    background: none;
    font-size: 14px;
    line-height: 20px;
    font-weight: ${(p) => (p.$active ? 600 : 700)};
    color: ${(p) => (p.$active ? "#1f3444" : "#a6abaf")};
`
const Highlight = styled.div`
    position: absolute;
    left: -11px;
    top: -5px;
    width: 55px;
    height: 37px;
    border: 5px solid #ed1c24;
    pointer-events: none;
`
const Pointer = styled.svg`
    position: absolute;
    left: 5px;
    top: 54px;
    z-index: 1;
    pointer-events: none;
`
const ModalBody = styled.div`
    display: grid;
    grid-template-columns: 558fr 342fr;
    margin-top: 40px;
`
const Funds = styled.form`
    padding-right: 40px;
    border-right: 2px solid #f0f1f1;
`
const FieldRow = styled.div`
    display: flex;
    gap: 5px;
`
const AmountField = styled.div`
    flex: 0 0 146px;
`
const DestinationField = styled.div`
    flex: 1;
`
const LabelRow = styled.div`
    display: flex;
    justify-content: space-between;
    padding-right: 8px;
`
const Label = styled.label`
    display: block;
    font-size: 11px;
    line-height: 16px;
    font-weight: 600;
`
const MaxButton = styled.button`
    padding: 0;
    border: 0;
    background: none;
    font-size: 11px;
    line-height: 16px;
    font-weight: 600;
    color: #c3c7ca;
`
const InputBox = styled.div`
    display: grid;
    grid-template-columns: 1fr auto;
    align-items: center;
    flex: 1;
    height: ${(p) => (p.$tall ? 55 : 39)}px;
    margin-top: 2px;
    border: 3px solid #dcdcdc;
    border-radius: 3px;
    input, select {
        grid-area: 1 / 1 / 2 / 3;
        width: 100%;
        height: 100%;
        padding: 0 8px;
        border: 0;
        background: none;
        appearance: none;
        font-size: 12px;
        font-weight: 700;
        color: #444;
    }
    input::placeholder {
        color: #777;
    }
    span, svg {
        grid-area: 1 / 2;
        margin-right: 11px;
        font-size: 11px;
        font-weight: 600;
        color: #4b5862;
        pointer-events: none;
    }
    svg {
        margin-right: 8px;
    }
`
const Accounts = styled.div`
    display: flex;
    gap: 10px;
    margin: 20px 0 17px;
`
const SmallButton = styled.button`
    height: 21px;
    padding: 0 5px;
    border: 2px solid #b3babf;
    border-radius: 3px;
    background: #fff;
    font-size: 9px;
    font-weight: 600;
    color: #6b757d;
`
const CodeRow = styled.div`
    display: flex;
    align-items: flex-end;
    gap: 8px;
`
const CodeButton = styled.button`
    width: 110px;
    height: 55px;
    border: 0;
    border-radius: 3px;
    background: #5a93d6;
    color: #fff;
    font-size: 11px;
    font-weight: 700;
    text-shadow: 0 1px 1px rgba(0, 0, 0, 0.2);
`
const Help = styled.p`
    margin-top: 30px;
    padding-bottom: 20px;
    border-bottom: 1px solid #e3e5e6;
    font-size: 13px;
    line-height: 18px;
    color: #727c84;
`
const Submit = styled(CodeButton)`
    width: 100%;
    height: 54px;
    margin-top: 40px;
    font-size: 14px;
`
const Limits = styled.aside`
    padding-left: 40px;
    font-size: 13px;
    line-height: 18px;
    color: #727c84;
    h3 {
        font-size: 14px;
        line-height: 16px;
        font-weight: 600;
        color: #1f3444;
    }
`
const LimitLabel = styled.label`
    display: block;
    margin-top: 23px;
    font-size: 12px;
    font-weight: 700;
    color: #5f6b74;
`
const LimitBar = styled.progress`
    display: block;
    appearance: none;
    width: 100%;
    height: 10px;
    margin: 3px 0;
    border: 0;
    background: #dcdcdc;
    &::-webkit-progress-bar {
        background: #dcdcdc;
    }
    &::-webkit-progress-value {
        background: #5a93d6;
    }
`
const LimitText = styled.p`
    font-size: 12px;
    b {
        font-weight: 700;
        color: #5f6b74;
    }
`
const ApplyText = styled.p`
    margin: 15px 0 20px;
    padding-bottom: 20px;
    border-bottom: 1px solid #e3e5e6;
    a {
        display: inline-block;
        border-bottom: 2px solid #5a93d6;
        color: #5a93d6;
        font-weight: 700;
        text-decoration: none;
    }
`
const Processing = styled.p`
    margin-top: 24px;
`
const Bar = styled.footer`
    display: flex;
    height: 40px;
    background: linear-gradient(#050505 8px, transparent 8px), linear-gradient(to right, #000 62px, #272727 62px);
    color: #f2f2f2;
`
const SystemButton = styled(PlainButton)`
    width: 48px;
`
const AppList = styled.div`
    display: flex;
    padding-left: 2px;
`
const AppButton = styled(PlainButton)`
    position: relative;
    width: 49px;
    background: ${(p) => (p.$active ? "#4c4c4c" : "none")};
    &::after {
        content: "";
        position: absolute;
        left: ${(p) => (p.$active ? 0 : 5)}px;
        right: ${(p) => (p.$active ? 0 : 4)}px;
        bottom: 0;
        height: 2px;
        background: ${(p) => (p.$open ? "#fbb4ac" : "none")};
    }
`
const Badge = styled.span`
    position: absolute;
    right: 4px;
    bottom: 5px;
    width: 16px;
    height: 16px;
    border: 1px solid #999;
    border-radius: 50%;
    background: #2b2b2b;
    color: #fff;
    font-size: 11px;
    line-height: 14px;
    font-weight: 600;
    text-align: center;
`
const Tray = styled.div`
    display: flex;
    align-items: center;
    margin-left: auto;
    font-size: 12px;
    > svg:nth-child(1) {
        margin-right: 22px;
    }
    > svg:nth-child(2) {
        margin-right: 10px;
    }
    > svg:nth-child(3) {
        margin-right: 7px;
    }
    > svg:nth-child(4) {
        margin-right: 10px;
    }
`
const Clock = styled.time`
    display: flex;
    flex-direction: column;
    align-items: center;
    width: 74px;
    font-size: 11px;
    line-height: 18px;
`
const ActionCenter = styled(PlainButton)`
    position: relative;
    width: 48px;
    padding: 0 18px 2px 0;
    background: #000;
    ${Badge} {
        right: 17px;
    }
`

export default App;
